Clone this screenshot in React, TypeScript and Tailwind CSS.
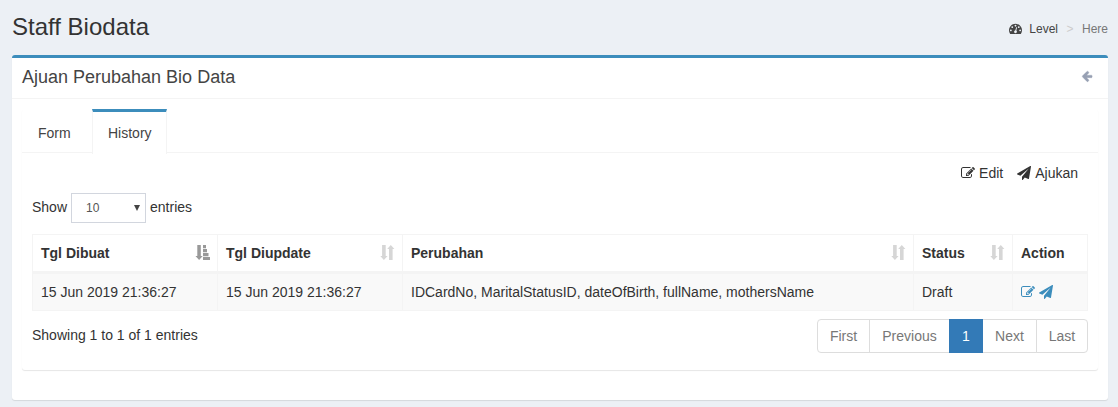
import React from "react";

const PENCIL =
  "M888 1184l116-116-152-152-116 116v56h96v96h56zm440-720q-16-16-33 1l-350 350q-17 17-1 33t33-1l350-350q17-17 1-33zm80 594v190q0 119-84.5 203.5t-203.5 84.5h-832q-119 0-203.5-84.5t-84.5-203.5v-832q0-119 84.5-203.5t203.5-84.5h832q63 0 117 25 15 7 18 23 3 17-9 29l-49 49q-14 14-32 8-23-6-45-6h-832q-66 0-113 47t-47 113v832q0 66 47 113t113 47h832q66 0 113-47t47-113v-126q0-13 9-22l64-64q15-15 35-7t20 29zm-96-738l288 288-672 672h-288v-288zm444 132l-92 92-288-288 92-92q28-28 68-28t68 28l152 152q28 28 28 68t-28 68z";
const PLANE =
  "M1764 11q33 24 27 64l-256 1536q-5 29-32 45-14 8-31 8-11 0-24-5l-453-185-242 295q-18 23-49 23-13 0-22-4-19-7-30.5-23.5t-11.5-36.5v-349l864-1059-1069 925-395-162q-37-14-40-55-2-40 32-59l1664-960q15-9 32-9 20 0 36 11z";
const ARROW_LEFT =
  "M1664 896v128q0 53-32.5 90.5t-84.5 37.5h-704l293 294q38 36 38 90t-38 90l-75 76q-37 37-90 37-52 0-91-37l-651-652q-37-37-37-90 0-52 37-91l651-650q38-38 91-38 52 0 90 38l75 74q38 38 38 91t-38 91l-293 293h704q52 0 84.5 37.5t32.5 90.5z";
const GAUGE =
  "M384 1152q0-53-37.5-90.5t-90.5-37.5-90.5 37.5-37.5 90.5 37.5 90.5 90.5 37.5 90.5-37.5 37.5-90.5zm192-448q0-53-37.5-90.5t-90.5-37.5-90.5 37.5-37.5 90.5 37.5 90.5 90.5 37.5 90.5-37.5 37.5-90.5zm428 481l101-382q6-26-7.5-48.5t-38.5-29.5-48 6.5-30 39.5l-101 382q-60 5-107 43.5t-63 98.5q-20 77 20 146t117 89 146-20 89-117q16-60-6-117t-72-91zm660-33q0-53-37.5-90.5t-90.5-37.5-90.5 37.5-37.5 90.5 37.5 90.5 90.5 37.5 90.5-37.5 37.5-90.5zm-640-640q0-53-37.5-90.5t-90.5-37.5-90.5 37.5-37.5 90.5 37.5 90.5 90.5 37.5 90.5-37.5 37.5-90.5zm448 192q0-53-37.5-90.5t-90.5-37.5-90.5 37.5-37.5 90.5 37.5 90.5 90.5 37.5 90.5-37.5 37.5-90.5zm320 448q0 261-141 483-19 29-54 29h-1402q-35 0-54-29-141-221-141-483 0-182 71-348t191-286 286-191 348-71 348 71 286 191 191 286 71 348z";

function Icon({ d, className }: { d: string; className: string }) {
  return (
    <svg viewBox="0 0 1792 1792" fill="currentColor" className={"shrink-0 overflow-visible " + className}>
      <path d={d} />
    </svg>
  );
}

function SortIcon({ active }: { active?: boolean }) {
  return active ? (
    <svg viewBox="0 0 15 15" className="-mt-px h-[15px] w-[15px] shrink-0 text-[#999]" fill="currentColor">
      <path d="M2.3 0h3.5v11h1.9L4.1 15 .5 11h1.8zM8 0h3v3.3H8zM8 4h4v3.3H8zM8 8h5.5v3.3H8zM8 12h7v3H8z" />
    </svg>
  ) : (
    <svg viewBox="0 0 15 15" className="-mt-px h-[15px] w-[15px] shrink-0 text-[#d6d6d6]" fill="currentColor">
      <path d="M2.1 0h3.6v11h1.9L3.9 15 .3 11h1.8zM10.8 0l3.6 4h-1.8v11H9V4H7.2z" />
    </svg>
  );
}

const columns = [
  { label: "Tgl Dibuat", width: "w-[185px]", sort: "asc" },
  { label: "Tgl Diupdate", width: "w-[185px]", sort: "both" },
  { label: "Perubahan", width: "w-[511px]", sort: "both" },
  { label: "Status", width: "w-[99px]", sort: "both" },
  { label: "Action", width: "w-[75px]", sort: "none" },
];

const row = [
  "15 Jun 2019 21:36:27",
  "15 Jun 2019 21:36:27",
  "IDCardNo, MaritalStatusID, dateOfBirth, fullName, mothersName",
  "Draft",
];

const pages = [
  { label: "First", style: "w-[53px] rounded-l border-[#ddd] bg-white text-[#777]" },
  { label: "Previous", style: "-ml-px w-[81px] border-[#ddd] bg-white text-[#777]" },
  { label: "1", style: "z-10 -ml-px w-[34px] border-[#337ab7] bg-[#337ab7] text-white" },
  { label: "Next", style: "-ml-px w-[55px] border-[#ddd] bg-white text-[#777]" },
  { label: "Last", style: "-ml-px w-[52px] rounded-r border-[#ddd] bg-white text-[#777]" },
];

export default function App() {
  return (
    <div className="h-[407px] overflow-hidden bg-[#ecf0f5] px-3 pr-[10px] font-['Liberation_Sans',Arial,sans-serif] text-sm leading-5 text-[#333]">
      <header className="flex h-[55px] items-start justify-between">
        <h1 className="pt-[14px] text-2xl leading-[26px]">Staff Biodata</h1>
        <nav className="flex items-start pt-[21px] text-xs leading-[17px]">
          <Icon d={GAUGE} className="mr-[7px] mt-px h-[13px] w-[13px] text-[#444]" />
          <span className="text-[#444]">Level</span>
          <span className="w-[24px] text-center text-[#ccc]">&gt;</span>
          <span className="text-[#777]">Here</span>
        </nav>
      </header>

      <main className="h-[345px] rounded-[3px] border-t-[3px] border-[#3c8dbc] bg-white shadow-[0_1px_1px_rgba(0,0,0,0.1)]">
        <div className="flex h-[41px] items-start justify-between border-b border-[#f4f4f4] px-[10px] pt-[10px]">
          <h2 className="text-lg leading-[18px] text-[#444]">Ajuan Perubahan Bio Data</h2>
          <Icon d={ARROW_LEFT} className="mr-[5px] mt-[2px] h-[12px] w-[12px] stroke-current stroke-[50] text-[#97a0b3]" />
        </div>

        <div className="p-[10px]">
          <section className="h-[261px] rounded-[3px] shadow-[0_1px_1px_rgba(0,0,0,0.1)]">
            <div className="flex h-11 border-b border-[#f4f4f4] text-[#444]">
              <div className="w-[70px] pl-4 pt-[14px]">Form</div>
              <div className="h-[45px] w-[75px] border-x border-t-[3px] border-x-[#f4f4f4] border-t-[#3c8dbc] bg-white pl-[15px] pt-[11px]">
                History
              </div>
            </div>

            <div className="px-[10px] pt-[10px]">
              <div className="flex justify-end gap-[14px] pr-[10px]">
                <span className="flex items-center gap-1">
                  <Icon d={PENCIL} className="h-[14px] w-[14px]" />
                  Edit
                </span>
                <span className="flex items-center gap-1">
                  <Icon d={PLANE} className="h-[14px] w-[14px]" />
                  Ajukan
                </span>
              </div>

              <div className="mt-[10px] flex h-[30px] items-start">
                <span className="mt-[4px]">Show</span>
                <div className="mx-1 flex h-[30px] w-[75px] items-center justify-between border border-[#d2d6de] pl-[14px] pr-[5px] text-xs text-[#555]">
                  <span>10</span>
                  <svg viewBox="0 0 6 6" className="h-[6px] w-[6px]" fill="#444">
                    <path d="M0 0h6L3 6z" />
                  </svg>
                </div>
                <span className="mt-[4px]">entries</span>
              </div>

              <table className="mt-[11px] w-[1056px] table-fixed border-separate border-spacing-0 border-l border-t border-[#f4f4f4]">
                <thead>
                  <tr>
                    {columns.map((c) => (
                      <th
                        key={c.label}
                        className={"h-[38px] border-b-2 border-r border-[#f4f4f4] p-0 pl-2 text-left " + c.width}
                      >
                        <div className="flex items-center justify-between pr-[7px]">
                          {c.label}
                          {c.sort !== "none" && <SortIcon active={c.sort === "asc"} />}
                        </div>
                      </th>
                    ))}
                  </tr>
                </thead>
                <tbody>
                  <tr className="bg-[#f9f9f9]">
                    {row.map((v, i) => (
                      <td key={i} className="h-[38px] border-y border-r border-[#f4f4f4] p-0 pl-2">
                        {v}
                      </td>
                    ))}
                    <td className="h-[38px] border-y border-r border-[#f4f4f4] p-0 pl-2">
                      <div className="flex items-center gap-1 text-[#3c8dbc]">
                        <Icon d={PENCIL} className="h-[14px] w-[14px]" />
                        <Icon d={PLANE} className="h-[14px] w-[14px]" />
                      </div>
                    </td>
                  </tr>
                </tbody>
              </table>

              <div className="mt-2 flex items-start justify-between">
                <span className="mt-[6px]">Showing 1 to 1 of 1 entries</span>
                <div className="flex">
                  {pages.map((p) => (
                    <span key={p.label} className={"flex h-[34px] items-center justify-center border " + p.style}>
                      {p.label}
                    </span>
                  ))}
                </div>
              </div>
            </div>
          </section>
        </div>
      </main>
    </div>
  );
}
